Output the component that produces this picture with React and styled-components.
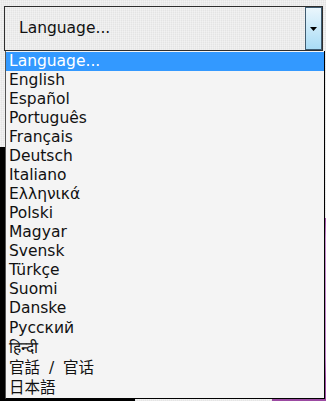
import React, { useState } from "react";
import styled, { createGlobalStyle } from "styled-components";

const languages = [
  "Language...",
  "English",
  "Español",
  "Português",
  "Français",
  "Deutsch",
  "Italiano",
  "Ελληνικά",
  "Polski",
  "Magyar",
  "Svensk",
  "Türkçe",
  "Suomi",
  "Danske",
  "Русский",
  "हिन्दी",
  "官話 / 官话",
  "日本語",
];

const GlobalStyle = createGlobalStyle`
  html, body {
    margin: 0;
    padding: 0;
  }
  body {
    width: 326px;
    height: 401px;
    overflow: hidden;
    font-family: "DejaVu Sans", "Noto Sans CJK TC", sans-serif;
    background:
      linear-gradient(#000, #000) 0 147px / 5px 254px no-repeat,
      linear-gradient(#000, #000) 0 396px / 135px 5px no-repeat,
      linear-gradient(#9c4ba2, #9c4ba2) 272px 396px / 54px 5px no-repeat,
      linear-gradient(#9c4ba2 0, #c48ccc 20px, #bb7fc4 140px, #9c4ba2 160px) 324px 218px / 2px 183px no-repeat,
      repeating-linear-gradient(90deg, rgba(255, 255, 255, 0.35) 0 1px, transparent 1px 2px),
      repeating-linear-gradient(0deg, rgba(0, 0, 0, 0.03) 0 1px, transparent 1px 2px),
      #ebebeb;
  }
`;

const Page = styled.main`
  display: flex;
  flex-direction: column;
  padding: 6px 0 0 4px;
`;

const SelectBox = styled.div`
  display: flex;
  width: 319px;
  height: 45px;
  box-sizing: border-box;
  border: 1px solid #2e2e2e;
`;

const Current = styled.div`
  flex: 1;
  display: flex;
  align-items: center;
  padding: 0 0 2px 14px;
  font-size: 15.5px;
  color: #111;
`;

const ArrowButton = styled.div`
  width: 17px;
  box-sizing: border-box;
  border: 1px solid #3f5b70;
  background: linear-gradient(#eaf6fc, #a9dcf6);
  display: flex;
  align-items: center;
  justify-content: center;
`;

const Listbox = styled.ul`
  list-style: none;
  margin: 0 0 0 1px;
  padding: 1px 0 0;
  width: 320px;
  box-sizing: border-box;
  background: #f4f4f4;
  border-left: 1px solid #555;
  border-right: 1px solid #000;
  border-bottom: 1px solid #000;
`;

const Option = styled.li`
  height: ${(p) => (p.$tall ? "20px" : "19px")};
  line-height: ${(p) => (p.$tall ? "20px" : "19px")};
  padding-left: 3px;
  font-size: 15.5px;
  white-space: pre;
  word-spacing: ${(p) => (p.$tall ? "4px" : "0")};
  color: ${(p) => (p.$active ? "#fff" : "#111")};
  background: ${(p) => (p.$active ? "#3399ff" : "transparent")};
`;

const App = () => {
  const [selected, setSelected] = useState(0);

  return (
    <>
      <GlobalStyle />
      <Page>
        <SelectBox>
          <Current>Language...</Current>
          <ArrowButton>
            <svg width="7" height="4" viewBox="0 0 7 4">
              <path d="M0 0h7L3.5 4z" fill="#000" />
            </svg>
          </ArrowButton>
        </SelectBox>
        <Listbox>
          {languages.map((lang, i) => (
            <Option
              key={lang}
              $active={i === selected}
              $tall={i >= 14}
              onMouseEnter={() => setSelected(i)}
            >
              {lang}
            </Option>
          ))}
        </Listbox>
      </Page>
    </>
  );
};

export default App;
